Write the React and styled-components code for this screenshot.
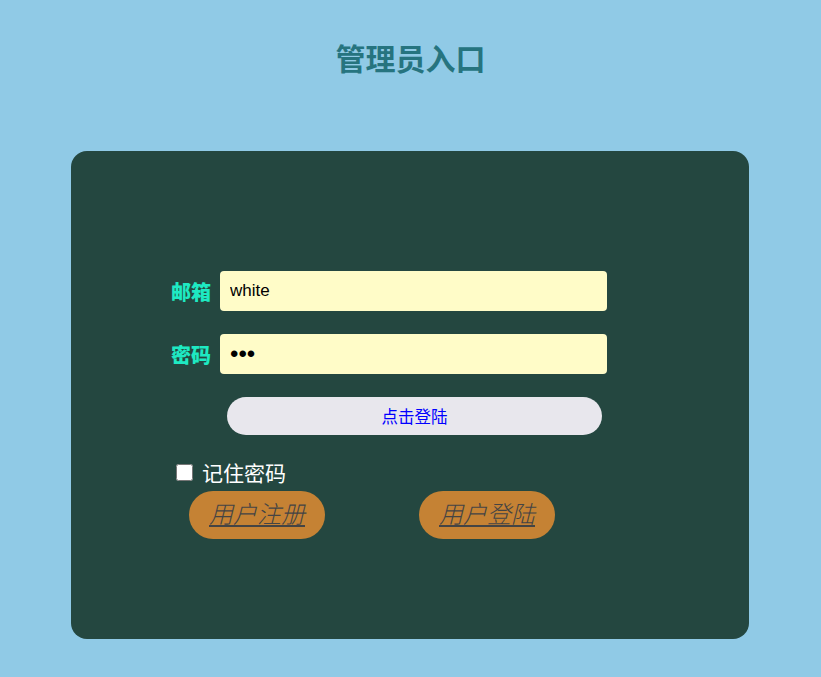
import React from 'react';
import styled, { createGlobalStyle } from 'styled-components';

const Global = createGlobalStyle`
  html, body {
    margin: 0;
    padding: 0;
    background: #90cae6;
    font-family: "Liberation Sans", "Noto Sans CJK SC", sans-serif;
  }
`

const Page = styled.div`
  width: 821px;
  height: 677px;
  box-sizing: border-box;
  padding-top: 41px;
`

const Title = styled.h1`
  margin: 0 0 77px;
  height: 33px;
  line-height: 33px;
  text-align: center;
  font-size: 30px;
  font-weight: bold;
  color: #26747f;
  font-family: "Noto Sans CJK SC", sans-serif;
`

const Card = styled.div`
  width: 678px;
  height: 488px;
  margin-left: 71px;
  box-sizing: border-box;
  background: #244740;
  border-radius: 16px;
  padding: 120px 0 0 100px;
`

const Row = styled.div`
  display: flex;
  align-items: center;
  margin-bottom: 23px;
`

const Label = styled.label`
  width: 49px;
  font-size: 20px;
  font-weight: 900;
  color: #1ee9c2;
  font-family: "Noto Sans CJK SC", sans-serif;
`

const Input = styled.input`
  width: 387px;
  height: 40px;
  box-sizing: border-box;
  border: none;
  border-radius: 4px;
  background: #fffcc8;
  padding: 0 10px;
  font-size: ${p => (p.type === 'password' ? '24px' : '17px')};
  font-family: "Liberation Sans", "Noto Sans CJK SC", sans-serif;
  color: #000;
  outline: none;
`

const Submit = styled.button`
  display: block;
  width: 375px;
  height: 38px;
  margin-left: 56px;
  border: none;
  border-radius: 19px;
  background: #e8e7ed;
  color: #0000ff;
  font-size: 16.5px;
  font-family: "Noto Sans CJK SC", sans-serif;
`

const Remember = styled.div`
  display: flex;
  align-items: center;
  margin-top: 25px;
  padding-left: 1px;
  height: 24px;
  color: #fff;
  font-size: 21px;
  font-family: "Noto Sans CJK SC", sans-serif;
`

const Check = styled.input`
  width: 17px;
  height: 17px;
  margin: 0 9px 0 4px;
`

const Links = styled.div`
  display: flex;
  gap: 94px;
  margin-top: 7px;
  padding-left: 18px;
`

const LinkButton = styled.a`
  display: flex;
  align-items: center;
  justify-content: center;
  width: 136px;
  height: 48px;
  box-sizing: border-box;
  padding-bottom: 5px;
  border-radius: 24px;
  background: #c58234;
  color: #444;
  font-size: 24px;
  font-weight: 300;
  font-style: italic;
  text-decoration: underline;
  font-family: "Noto Sans CJK SC", sans-serif;
`

export default function App() {
  return (
    <Page>
      <Global />
      <Title>管理员入口</Title>
      <Card>
        <Row>
          <Label>邮箱</Label>
          <Input type="text" defaultValue="white" />
        </Row>
        <Row>
          <Label>密码</Label>
          <Input type="password" defaultValue="abc" />
        </Row>
        <Submit>点击登陆</Submit>
        <Remember>
          <Check type="checkbox" />
          记住密码
        </Remember>
        <Links>
          <LinkButton href="#">用户注册</LinkButton>
          <LinkButton href="#">用户登陆</LinkButton>
        </Links>
      </Card>
    </Page>
  );
}
